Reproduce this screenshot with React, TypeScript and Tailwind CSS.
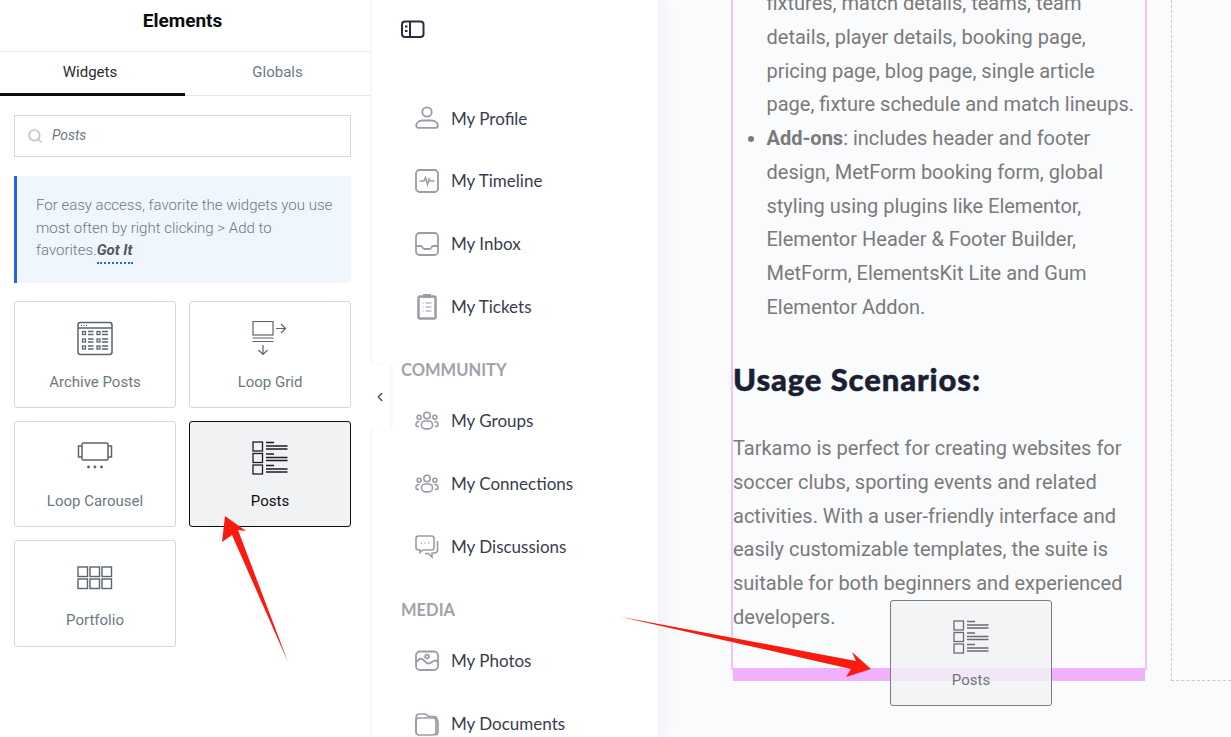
import React from 'react';
import { Search, ChevronLeft } from 'lucide-react';

function ArchiveIcon() {
  return (
    <svg width="36" height="36" viewBox="0 0 36 36" fill="none" stroke="#5b636e" strokeWidth="1.3">
      <rect x="1" y="1.5" width="34" height="32" rx="2.5" strokeWidth="1.5" />
      <path d="M1 7h34" />
      <path d="M4 4.3h1M6.5 4.3h1M9 4.3h1" />
      {[10.5, 18, 25].map((y) => (
        <g key={y}>
          <rect x="5.5" y={y} width="3" height="3" />
          <path d={`M11 ${y}h5.5M11 ${y + 3}h5.5`} />
          <rect x="20" y={y} width="3" height="3" />
          <path d={`M25 ${y}h6M25 ${y + 3}h6`} />
        </g>
      ))}
    </svg>
  );
}

function LoopGridIcon() {
  return (
    <svg width="36" height="36" viewBox="0 0 36 36" fill="none" stroke="#5b636e" strokeWidth="1.2">
      <rect x="1" y="0.5" width="20" height="13.5" />
      <path d="M0.5 17h21M0.5 20.5h21" />
      <path d="M24 7.5h9M29 3l4.5 4.5L29 12" />
      <path d="M11 24v9M6.5 29l4.5 4.5 4.5-4.5" />
    </svg>
  );
}

function CarouselIcon() {
  return (
    <svg width="36" height="36" viewBox="0 0 36 36" fill="none" stroke="#5b636e" strokeWidth="1.5">
      <rect x="5" y="2" width="26" height="17" rx="1.5" />
      <path d="M5 5H1.5v11H5M31 5h3.5v11H31" />
      <g fill="#5b636e" stroke="none">
        <circle cx="11.5" cy="26" r="1.4" />
        <circle cx="18" cy="26" r="1.4" />
        <circle cx="24.5" cy="26" r="1.4" />
      </g>
    </svg>
  );
}

function PortfolioIcon() {
  return (
    <svg width="36" height="36" viewBox="0 0 36 36" fill="none" stroke="#5b636e" strokeWidth="1.4">
      {[1, 13, 25].map((x) => (
        <g key={x}>
          <rect x={x} y="7" width="9.5" height="9.5" />
          <rect x={x} y="19" width="9.5" height="9.5" />
        </g>
      ))}
    </svg>
  );
}

function PostsIcon({ color }: { color: string }) {
  return (
    <svg width="36" height="36" viewBox="0 0 36 36" fill="none" stroke={color} strokeWidth="1.3">
      {[1, 12.5, 24].map((y) => (
        <g key={y}>
          <rect x="1" y={y} width="9.5" height="9" />
          <path d={`M14 ${y + 0.5}h8M14 ${y + 4}h21.5M14 ${y + 7}h21.5`} />
        </g>
      ))}
    </svg>
  );
}

function ProfileIcon() {
  return (
    <svg width="24" height="24" viewBox="0 0 24 24" fill="none" stroke="#9a9ca6" strokeWidth="1.8">
      <circle cx="12" cy="6" r="4.7" />
      <path d="M1.2 19.5c0-3 3-5 6-5h9.6c3 0 6 2 6 5 0 1.500-.8 2.300-2 2.300H3.200c-1.200 0-2-.8-2-2.300z" />
    </svg>
  );
}

function TimelineIcon() {
  return (
    <svg width="24" height="24" viewBox="0 0 24 24" fill="none" stroke="#9a9ca6" strokeWidth="1.8">
      <rect x="1" y="1" width="22" height="22" rx="3.5" />
      <path d="M4.500 12h4.500l1.500-3.500 2 7 1.500-5.500 1 2h4.500" strokeWidth="1.5" />
    </svg>
  );
}

function InboxIcon() {
  return (
    <svg width="24" height="24" viewBox="0 0 24 24" fill="none" stroke="#9a9ca6" strokeWidth="1.8">
      <rect x="1" y="1" width="22" height="22" rx="3.5" />
      <path d="M1 14h5c1.500 0 1.500 3 3.500 3h5c2 0 2-3 3.500-3h5" />
    </svg>
  );
}

function TicketsIcon() {
  return (
    <svg width="24" height="26" viewBox="0 0 24 26" fill="none" stroke="#9a9ca6">
      <rect x="3.500" y="2.500" width="17" height="22" rx="1.500" strokeWidth="2.500" />
      <rect x="8.500" y="0.500" width="7" height="3" fill="#9a9ca6" strokeWidth="1" />
      <path d="M7.500 9h1M10.500 9h6M7.500 13h1M10.500 13h6M7.500 17h1M10.500 17h6" strokeWidth="1" />
    </svg>
  );
}

function GroupIcon() {
  return (
    <svg width="26" height="22" viewBox="0 0 26 22" fill="none" stroke="#9a9ca6" strokeWidth="1.700">
      <circle cx="13" cy="5" r="3.500" />
      <circle cx="4.500" cy="7" r="2.200" />
      <circle cx="21.500" cy="7" r="2.200" />
      <rect x="7" y="11" width="12" height="8.500" rx="4.200" />
      <path d="M5 11.500c-2.500 0-4 1.500-4 3.500 0 1.500 1.500 2 3.500 2M21 11.500c2.500 0 4 1.500 4 3.500 0 1.500-1.500 2-3.500 2" />
    </svg>
  );
}

function DiscussionIcon() {
  return (
    <svg width="24" height="24" viewBox="0 0 24 24" fill="none" stroke="#9a9ca6" strokeWidth="1.600">
      <path d="M3.500 1h13c1.500 0 2.500 1 2.500 2.500v9c0 1.500-1 2.500-2.500 2.500H8l-3 2.500V15H3.500C2 15 1 14 1 12.500v-9C1 2 2 1 3.500 1z" />
      <path d="M22.500 6v9c0 2-1.500 3-3 3h-2.500v4l-3.500-3.500H10" />
      <path d="M6 8h1M9.500 8h1M13 8h1" />
    </svg>
  );
}

function PhotoIcon() {
  return (
    <svg width="24" height="24" viewBox="0 0 24 24" fill="none" stroke="#9a9ca6" strokeWidth="1.800">
      <rect x="1" y="2.500" width="22" height="18.500" rx="4" />
      <circle cx="12" cy="7.500" r="1.800" />
      <path d="M1.500 13c3-4 5-4 7-2s4 5 7 3 5-4 7.500-1" />
    </svg>
  );
}

function FolderIcon() {
  return (
    <svg width="24" height="24" viewBox="0 0 24 24" fill="none" stroke="#9a9ca6" strokeWidth="1.700">
      <path d="M1 20.500V6.500C1 4 2 2 4 2h6c1.500 0 2.500 1.500 3 2.500h6c2 0 3 1.500 3 3.500" />
      <rect x="1" y="6" width="20" height="17" rx="3" />
      <path d="M21 8c1.500 0 2 1 2 2.500v9c0 2-1 3-2.500 3.500" />
    </svg>
  );
}

function PanelIcon() {
  return (
    <svg width="24" height="18" viewBox="0 0 24 18" fill="none" stroke="#2b2e41" strokeWidth="2">
      <rect x="1" y="1.500" width="21.500" height="15.500" rx="3" />
      <path d="M9 1.500V17" />
      <path d="M4 6.500h2.500M4 11h2.500" />
    </svg>
  );
}

const widgets = [
  { label: 'Archive Posts', icon: <ArchiveIcon /> },
  { label: 'Loop Grid', icon: <LoopGridIcon /> },
  { label: 'Loop Carousel', icon: <CarouselIcon /> },
  { label: 'Posts', icon: <PostsIcon color="#1b1d24" />, active: true },
  { label: 'Portfolio', icon: <PortfolioIcon /> },
];

function SideItem({ icon, label }: { icon: React.ReactNode; label: string }) {
  return (
    <div className="flex h-[62.8px] items-center pl-[45px]">
      <span className="flex w-[24px] justify-center">{icon}</span>
      <span className="ml-[12px] text-[17px] text-[#3a3c4e]">{label}</span>
    </div>
  );
}

function SideHeading({ children }: { children: React.ReactNode }) {
  return (
    <div className="flex h-[51.4px] items-center pl-[31px] pt-[13px] text-[16.5px] font-bold uppercase text-[#a0a2ab]">
      {children}
    </div>
  );
}

export default function App() {
  return (
    <div className="relative flex h-[737px] w-[1231px] overflow-hidden bg-[#fafbfd] font-['Roboto',sans-serif]">
      {/* Elementor panel */}
      <aside className="relative z-20 w-[370px] shrink-0 bg-white shadow-[0_0_4px_rgba(40,40,70,0.09)]">
        <div className="flex h-[52px] items-center justify-center border-b border-[#e6e8ea] pb-[8px] pr-[5px] text-[19px] font-bold text-[#0c0d0e]">
          Elements
        </div>
        <div className="flex h-[44px] border-b border-[#e6e8ea]">
          <div className="-mb-px flex w-[185px] items-center justify-center border-b-[3px] border-[#0c0d0e] pb-[1px] pr-[5px] text-[15px] text-[#2b2c30]">
            Widgets
          </div>
          <div className="flex w-[185px] items-center justify-center pb-[3px] text-[15px] text-[#6d7882]">Globals</div>
        </div>
        <div className="px-[14px] pr-[19px] pt-[19px]">
          <div className="flex h-[42px] items-center border border-[#d5d8dc] pb-[1px] pl-[12px]">
            <Search size={16} strokeWidth={2.5} className="text-[#c2c6cb]" />
            <span className="ml-[9px] text-[13.8px] italic text-[#6d7882]">Posts</span>
          </div>
          <div className="mt-[19px] h-[107px] rounded-r-[3px] border-l-[3px] border-[#2563eb] bg-[#eff6fe] pl-[19px] pr-[10px] pt-[18px] text-[15px] font-light leading-[22.5px] text-[#6d7882]">
            For easy access, favorite the widgets you use most often by right clicking &gt; Add to favorites.
            <span className="border-b-2 border-dotted border-[#2563eb] pb-[3px] font-bold italic text-[#515962]">Got It</span>
          </div>
          <div className="mt-[18px] grid grid-cols-2 grid-rows-[106.5px_106px_107px] gap-[13px]">
            {widgets.map((w) => (
              <div
                key={w.label}
                className={
                  w.active
                    ? 'flex flex-col items-center rounded-[3px] border border-[#0c0d0e] bg-[#f1f2f3] pt-[19px] text-[#0c0d0e]'
                    : 'flex flex-col items-center rounded-[3px] border border-[#d5d8dc] bg-white pt-[19px] text-[#6d7882]'
                }
              >
                <div className="h-[36px] w-[36px]">{w.icon}</div>
                <div className="mt-[14.8px] text-[15px] leading-[20px]">{w.label}</div>
              </div>
            ))}
          </div>
        </div>
        {/* collapse toggle */}
        <div className="absolute right-[-20px] top-[365px] flex h-[63px] w-[20px] items-center justify-center bg-white shadow-[2px_0_3px_rgba(40,40,70,0.05)]">
          <ChevronLeft size={14} strokeWidth={2.5} className="text-[#50535f]" />
        </div>
      </aside>

      {/* Site sidebar */}
      <nav className="relative z-10 w-[288px] shrink-0 bg-white font-['Lato',sans-serif] shadow-[0_0_18px_rgba(40,40,90,0.08)]">
        <div className="h-[87px] pl-[31px] pt-[20px]">
          <PanelIcon />
        </div>
        <SideItem icon={<ProfileIcon />} label="My Profile" />
        <SideItem icon={<TimelineIcon />} label="My Timeline" />
        <SideItem icon={<InboxIcon />} label="My Inbox" />
        <SideItem icon={<TicketsIcon />} label="My Tickets" />
        <SideHeading>Community</SideHeading>
        <SideItem icon={<GroupIcon />} label="My Groups" />
        <SideItem icon={<GroupIcon />} label="My Connections" />
        <SideItem icon={<DiscussionIcon />} label="My Discussions" />
        <SideHeading>Media</SideHeading>
        <SideItem icon={<PhotoIcon />} label="My Photos" />
        <SideItem icon={<FolderIcon />} label="My Documents" />
      </nav>

      {/* Canvas */}
      <main className="flex min-w-0 flex-1 items-start pl-[73px] text-[20px] leading-[33.75px] text-[#7a7a7a]">
        <div className="w-[416px] shrink-0">
          <div className="flow-root h-[670px] border-x-2 border-b-2 border-[#f5c0ff]">
            <ul className="-mt-[13px] list-disc pl-[33.5px]">
              <li className="list-none">fixtures, match details, teams, team details, player details, booking page, pricing page, blog page, single article page, fixture schedule and match lineups.</li>
              <li>
                <strong className="font-bold">Add-ons</strong>: includes header and footer design, MetForm booking form, global styling using plugins like Elementor, Elementor Header &amp; Footer Builder, MetForm, ElementsKit Lite and Gum Elementor Addon.
              </li>
            </ul>
            <h2 className="mt-[36px] font-['Lato',sans-serif] text-[31px] font-black leading-[36px] tracking-[0.9px] text-[#1c1e32] [-webkit-text-stroke:0.5px_#1c1e32]">Usage Scenarios:</h2>
            <p className="mt-[35.5px]">
              Tarkamo is perfect for creating websites for soccer clubs, sporting events and related activities. With a user-friendly interface and easily customizable templates, the suite is suitable for both beginners and experienced developers.
            </p>
          </div>
          <div className="mx-[2px] -mt-[2px] h-[13px] bg-[#f0b0fc]" />
        </div>
        <div className="ml-[24px] h-[681px] flex-1 border-b border-l border-dashed border-[#c9cace]" />
      </main>

      {/* Dragged widget */}
      <div className="absolute left-[890px] top-[600px] z-30 flex h-[106px] w-[162px] flex-col items-center rounded-[3px] border border-[#7d7d80] bg-[#f1f2f4]/85 pt-[19px] text-[#73737c]">
        <PostsIcon color="#6a6a70" />
        <div className="mt-[14px] text-[15px] leading-[20px]">Posts</div>
      </div>

      {/* Annotation arrows */}
      <svg className="pointer-events-none absolute left-0 top-0 z-40" width="1231" height="737" fill="#fb1a0e">
        <polygon points="225,516 246,531 238,530 288,662 232,535 222,542" />
        <polygon points="619,616.500 856,661 852,652 871,669 846,677 851,669" />
      </svg>
    </div>
  );
}
